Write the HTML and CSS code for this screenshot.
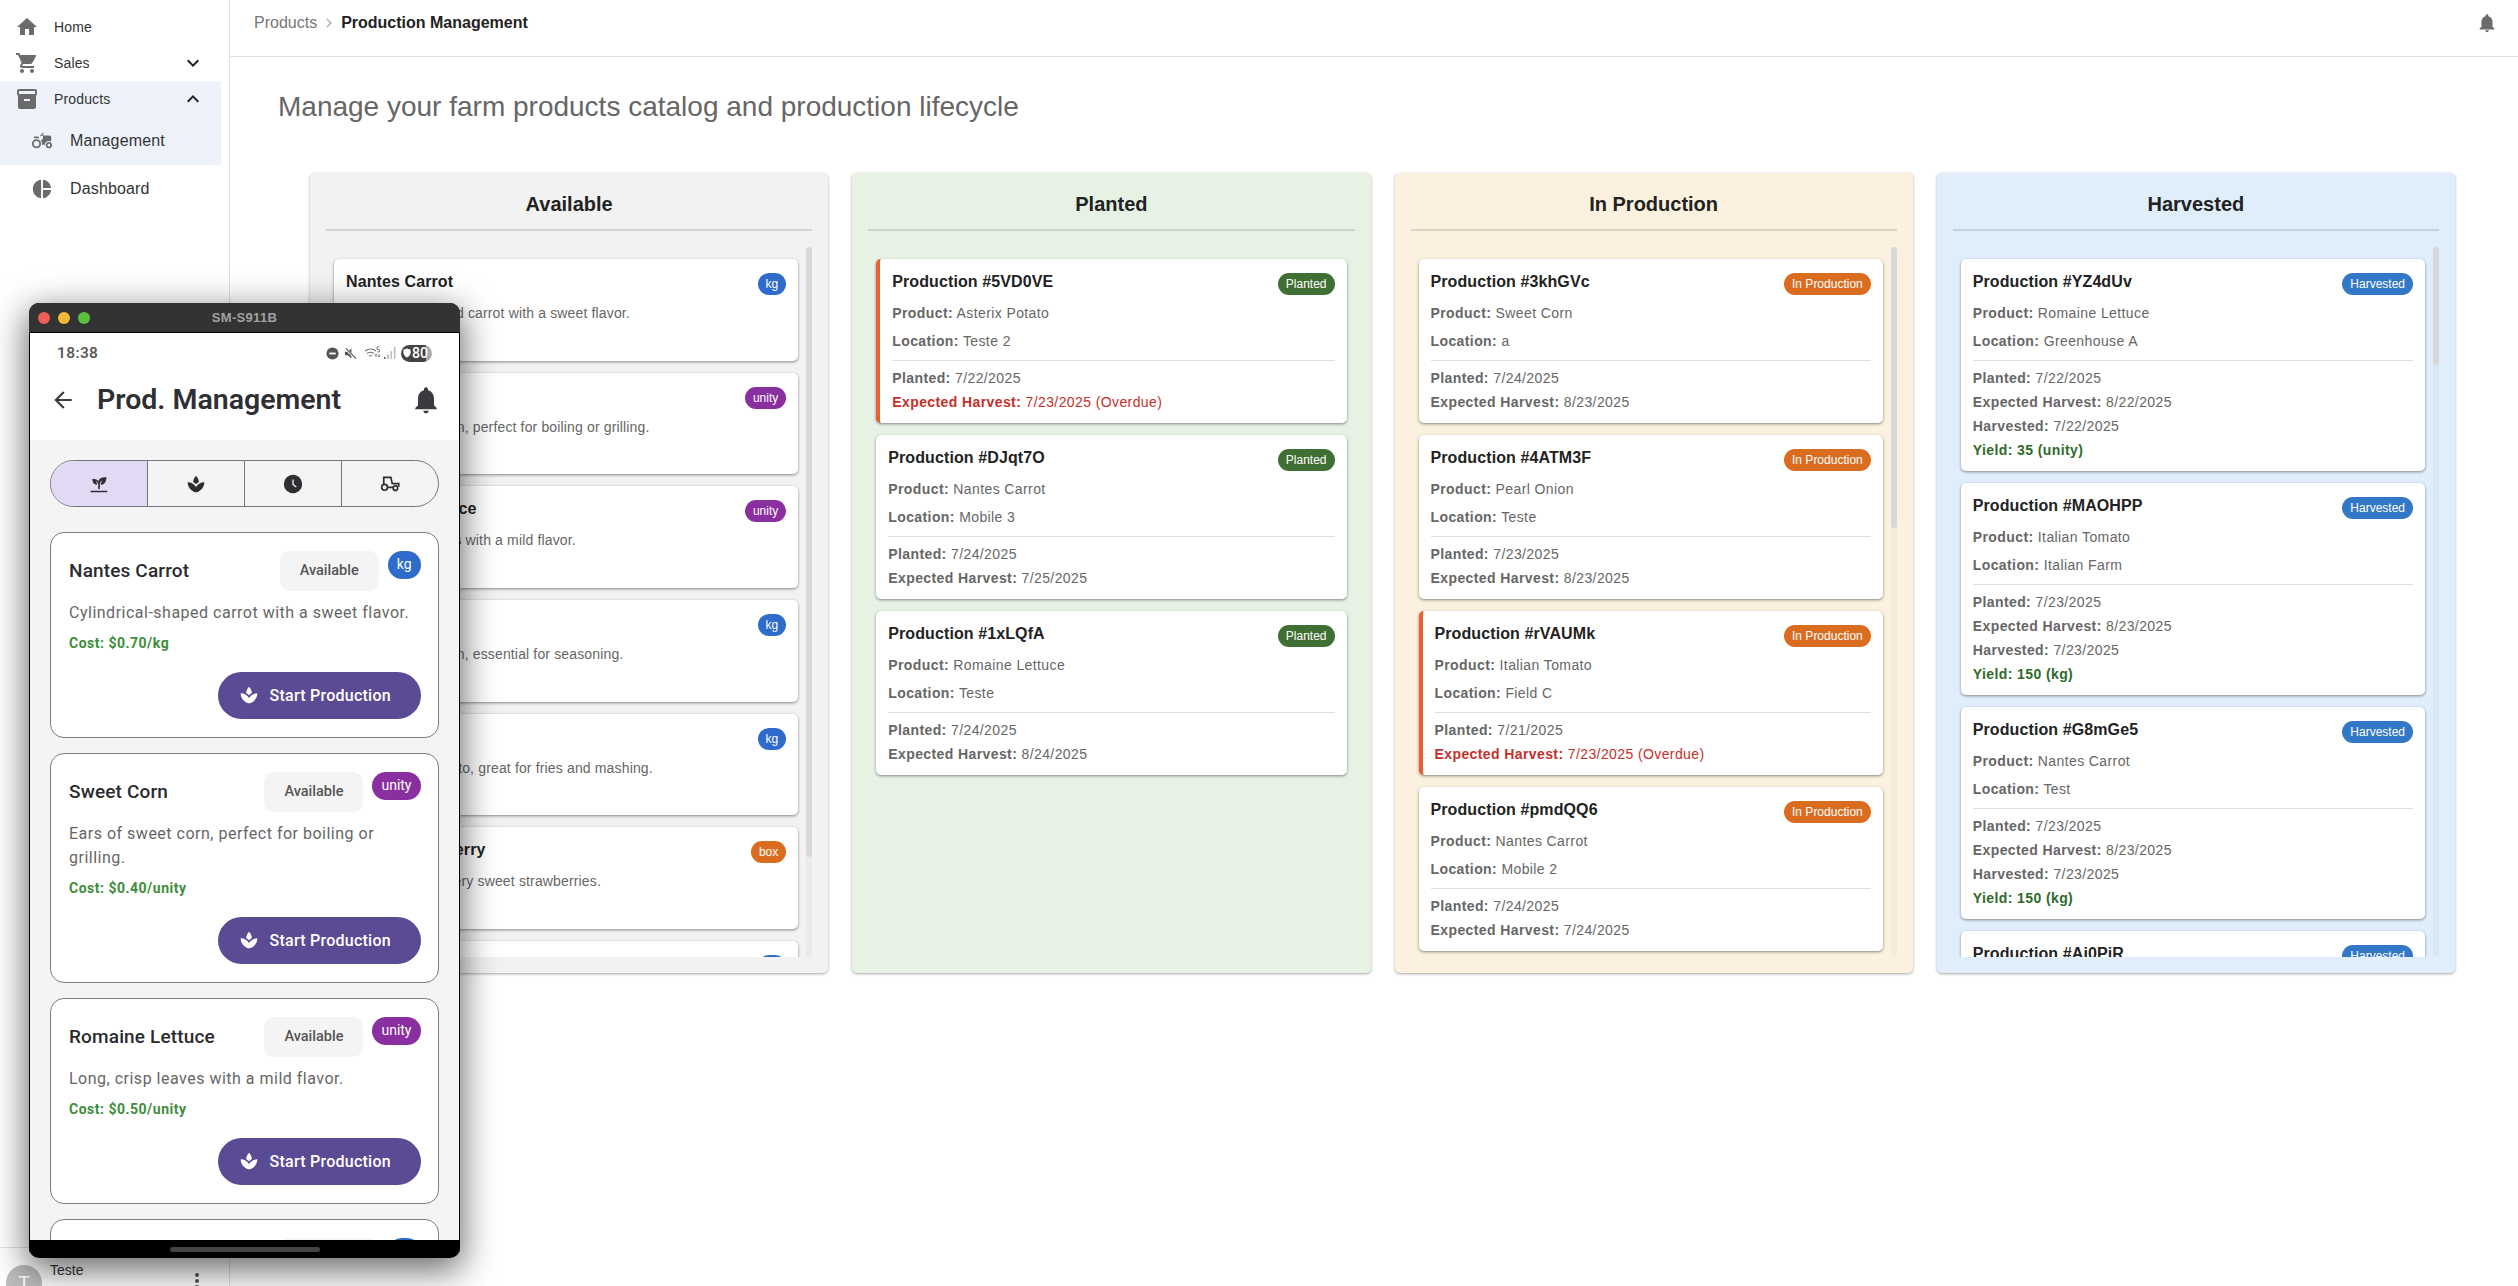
FILE: index.html
```html
<!DOCTYPE html>
<html lang="en">
<head>
    <meta charset="UTF-8">
    <title>Production Management</title>
    <link rel="stylesheet" href="styles.css">
</head>
<body>

<svg class="icon-defs" width="0" height="0">
    <symbol id="i-home" viewBox="0 0 24 24"><path d="M10 20v-6h4v6h5v-8h3L12 3 2 12h3v8z"/></symbol>
    <symbol id="i-cart" viewBox="0 0 24 24"><path d="M7 18c-1.1 0-1.99.9-1.99 2S5.9 22 7 22s2-.9 2-2-.9-2-2-2zM1 2v2h2l3.6 7.59-1.35 2.45c-.16.28-.25.61-.25.96 0 1.1.9 2 2 2h12v-2H7.42c-.14 0-.25-.11-.25-.25l.03-.12.9-1.63h7.45c.75 0 1.41-.41 1.75-1.03l3.58-6.49c.08-.14.12-.31.12-.48 0-.55-.45-1-1-1H5.21l-.94-2H1zm16 16c-1.1 0-1.99.9-1.99 2s.89 2 1.99 2 2-.9 2-2-.9-2-2-2z"/></symbol>
    <symbol id="i-box" viewBox="0 0 24 24"><path d="M20 2H4c-1 0-2 .9-2 2v3.01c0 .72.43 1.34 1 1.69V20c0 1.1 1.1 2 2 2h14c.9 0 2-.9 2-2V8.7c.57-.35 1-.97 1-1.69V4c0-1.1-1-2-2-2zm-5 12H9v-2h6v2zm5-7H4V4l16-.02V7z"/></symbol>
    <symbol id="i-more" viewBox="0 0 24 24"><path d="M16.59 8.59L12 13.17 7.41 8.59 6 10l6 6 6-6z"/></symbol>
    <symbol id="i-less" viewBox="0 0 24 24"><path d="M12 8l-6 6 1.41 1.41L12 10.83l4.59 4.58L18 14z"/></symbol>
    <symbol id="i-pie" viewBox="0 0 24 24"><path d="M11 2v20c-5.07-.5-9-4.79-9-10s3.93-9.5 9-10zm2.03 0v8.99H22c-.47-4.74-4.24-8.52-8.97-8.99zm0 11.01V22c4.74-.47 8.5-4.25 8.97-8.99h-8.97z"/></symbol>
    <symbol id="i-bell" viewBox="0 0 24 24"><path d="M12 22c1.1 0 2-.9 2-2h-4c0 1.1.89 2 2 2zm6-6v-5c0-3.07-1.64-5.64-4.5-6.32V4c0-.83-.67-1.5-1.5-1.5s-1.5.67-1.5 1.5v.68C7.63 5.36 6 7.92 6 11v5l-2 2v1h16v-1l-2-2z"/></symbol>
    <symbol id="i-back" viewBox="0 0 24 24"><path d="M20 11H7.83l5.59-5.59L12 4l-8 8 8 8 1.41-1.41L7.83 13H20v-2z"/></symbol>
    <symbol id="i-spa" viewBox="0 0 24 24"><path d="M15.49 9.63c-.18-2.79-1.31-5.51-3.43-7.63-2.14 2.14-3.32 4.86-3.55 7.63 1.28.68 2.46 1.56 3.49 2.63 1.03-1.06 2.21-1.94 3.49-2.63zM12 15.45C9.85 12.17 6.18 10 2 10c0 5.32 3.36 9.82 8.03 11.49.63.23 1.29.4 1.97.51.68-.12 1.33-.29 1.97-.51C18.64 19.82 22 15.32 22 10c-4.18 0-7.85 2.17-10 5.45z"/></symbol>
    <symbol id="i-farm" viewBox="0 0 24 24"><path d="M19.5 12c.93 0 1.78.28 2.5.76V8c0-1.1-.9-2-2-2h-6.29l-1.06-1.06 1.41-1.41-.71-.71-3.53 3.53.71.71 1.41-1.41L13 6.71V9c0 1.1-.9 2-2 2h-.54c.95 1.06 1.54 2.46 1.54 4 0 .34-.04.67-.09 1h3.14c.25-2.25 2.14-4 4.45-4zM19.5 13c-1.93 0-3.5 1.57-3.5 3.5s1.57 3.5 3.5 3.5 3.5-1.57 3.5-3.5-1.57-3.5-3.5-3.5zm0 5c-.83 0-1.5-.67-1.5-1.5s.67-1.5 1.5-1.5 1.5.67 1.5 1.5-.67 1.5-1.5 1.5zM4 9h5c0-1.1-.9-2-2-2H4c-.55 0-1 .45-1 1s.45 1 1 1zm2 1a5 5 0 100 10 5 5 0 000-10zm0 2a3 3 0 110 6 3 3 0 010-6z"/></symbol>
</svg>

<div class="app">
    <!-- Side menu -->
    <aside class="sidebar">
        <nav class="nav">
            <div class="nav-item"><svg class="nav-icon"><use href="#i-home"/></svg>Home</div>
            <div class="nav-item"><svg class="nav-icon"><use href="#i-cart"/></svg>Sales<svg class="nav-arrow"><use href="#i-more"/></svg></div>
            <div class="nav-open">
                <div class="nav-item"><svg class="nav-icon"><use href="#i-box"/></svg>Products<svg class="nav-arrow"><use href="#i-less"/></svg></div>
                <div class="nav-sub"><svg class="sub-icon"><use href="#i-farm"/></svg>Management</div>
            </div>
            <div class="nav-sub"><svg class="sub-icon"><use href="#i-pie"/></svg>Dashboard</div>
        </nav>
        <div class="user">
            <div class="avatar">T</div>
            <div class="user-name">Teste</div>
            <div class="user-menu"><i></i><i></i><i></i></div>
        </div>
    </aside>

    <div class="content">
        <header class="topbar">
            <span class="crumb">Products</span>
            <svg class="crumb-sep" viewBox="0 0 10 14"><path d="M3 3l4 4-4 4" fill="none" stroke="#aaa" stroke-width="1.3"/></svg>
            <strong class="crumb-now">Production Management</strong>
            <svg class="top-bell"><use href="#i-bell"/></svg>
        </header>

        <main class="page">
            <h1 class="page-title">Manage your farm products catalog and production lifecycle</h1>

            <div class="board">
                <!-- Available -->
                <section class="column col-available">
                    <h2 class="column-title">Available</h2>
                    <div class="column-body">
                        <div class="list">
                            <article class="card card-product">
                                <div class="card-head"><h3>Nantes Carrot</h3><span class="badge b-blue">kg</span></div>
                                <p class="desc">Cylindrical-shaped carrot with a sweet flavor.</p>
                                <p class="cost">Cost: $0.70/kg</p>
                            </article>
                            <article class="card card-product">
                                <div class="card-head"><h3>Sweet Corn</h3><span class="badge b-purple">unity</span></div>
                                <p class="desc">Ears of sweet corn, perfect for boiling or grilling.</p>
                                <p class="cost">Cost: $0.40/unity</p>
                            </article>
                            <article class="card card-product">
                                <div class="card-head"><h3>Romaine Lettuce</h3><span class="badge b-purple">unity</span></div>
                                <p class="desc">Long, crisp leaves with a mild flavor.</p>
                                <p class="cost">Cost: $0.50/unity</p>
                            </article>
                            <article class="card card-product">
                                <div class="card-head"><h3>Pearl Onion</h3><span class="badge b-blue">kg</span></div>
                                <p class="desc">Small yellow onion, essential for seasoning.</p>
                                <p class="cost">Cost: $0.60/kg</p>
                            </article>
                            <article class="card card-product">
                                <div class="card-head"><h3>Asterix Potato</h3><span class="badge b-blue">kg</span></div>
                                <p class="desc">Red-skinned potato, great for fries and mashing.</p>
                                <p class="cost">Cost: $0.30/kg</p>
                            </article>
                            <article class="card card-product">
                                <div class="card-head"><h3>Albion Strawberry</h3><span class="badge b-orange">box</span></div>
                                <p class="desc">Firm, large and very sweet strawberries.</p>
                                <p class="cost">Cost: $1.20/box</p>
                            </article>
                            <article class="card card-product">
                                <div class="card-head"><h3>Italian Tomato</h3><span class="badge b-blue">kg</span></div>
                                <p class="desc">Firm plum tomato, ideal for sauces.</p>
                            </article>
                        </div>
                        <div class="scroll"><div class="thumb thumb-available"></div></div>
                    </div>
                </section>

                <!-- Planted -->
                <section class="column col-planted">
                    <h2 class="column-title">Planted</h2>
                    <div class="column-body">
                        <div class="list">
                            <article class="card overdue">
                                <div class="card-head"><h3>Production #5VD0VE</h3><span class="badge b-green">Planted</span></div>
                                <p class="row"><b>Product:</b> Asterix Potato</p>
                                <p class="row"><b>Location:</b> Teste 2</p>
                                <hr class="rule">
                                <p class="date"><b>Planted:</b> 7/22/2025</p>
                                <p class="date late"><b>Expected Harvest:</b> 7/23/2025 (Overdue)</p>
                            </article>
                            <article class="card">
                                <div class="card-head"><h3>Production #DJqt7O</h3><span class="badge b-green">Planted</span></div>
                                <p class="row"><b>Product:</b> Nantes Carrot</p>
                                <p class="row"><b>Location:</b> Mobile 3</p>
                                <hr class="rule">
                                <p class="date"><b>Planted:</b> 7/24/2025</p>
                                <p class="date"><b>Expected Harvest:</b> 7/25/2025</p>
                            </article>
                            <article class="card">
                                <div class="card-head"><h3>Production #1xLQfA</h3><span class="badge b-green">Planted</span></div>
                                <p class="row"><b>Product:</b> Romaine Lettuce</p>
                                <p class="row"><b>Location:</b> Teste</p>
                                <hr class="rule">
                                <p class="date"><b>Planted:</b> 7/24/2025</p>
                                <p class="date"><b>Expected Harvest:</b> 8/24/2025</p>
                            </article>
                        </div>
                    </div>
                </section>

                <!-- In Production -->
                <section class="column col-production">
                    <h2 class="column-title">In Production</h2>
                    <div class="column-body">
                        <div class="list">
                            <article class="card">
                                <div class="card-head"><h3>Production #3khGVc</h3><span class="badge b-orange">In Production</span></div>
                                <p class="row"><b>Product:</b> Sweet Corn</p>
                                <p class="row"><b>Location:</b> a</p>
                                <hr class="rule">
                                <p class="date"><b>Planted:</b> 7/24/2025</p>
                                <p class="date"><b>Expected Harvest:</b> 8/23/2025</p>
                            </article>
                            <article class="card">
                                <div class="card-head"><h3>Production #4ATM3F</h3><span class="badge b-orange">In Production</span></div>
                                <p class="row"><b>Product:</b> Pearl Onion</p>
                                <p class="row"><b>Location:</b> Teste</p>
                                <hr class="rule">
                                <p class="date"><b>Planted:</b> 7/23/2025</p>
                                <p class="date"><b>Expected Harvest:</b> 8/23/2025</p>
                            </article>
                            <article class="card overdue">
                                <div class="card-head"><h3>Production #rVAUMk</h3><span class="badge b-orange">In Production</span></div>
                                <p class="row"><b>Product:</b> Italian Tomato</p>
                                <p class="row"><b>Location:</b> Field C</p>
                                <hr class="rule">
                                <p class="date"><b>Planted:</b> 7/21/2025</p>
                                <p class="date late"><b>Expected Harvest:</b> 7/23/2025 (Overdue)</p>
                            </article>
                            <article class="card">
                                <div class="card-head"><h3>Production #pmdQQ6</h3><span class="badge b-orange">In Production</span></div>
                                <p class="row"><b>Product:</b> Nantes Carrot</p>
                                <p class="row"><b>Location:</b> Mobile 2</p>
                                <hr class="rule">
                                <p class="date"><b>Planted:</b> 7/24/2025</p>
                                <p class="date"><b>Expected Harvest:</b> 7/24/2025</p>
                            </article>
                        </div>
                        <div class="scroll"><div class="thumb thumb-production"></div></div>
                    </div>
                </section>

                <!-- Harvested -->
                <section class="column col-harvested">
                    <h2 class="column-title">Harvested</h2>
                    <div class="column-body">
                        <div class="list">
                            <article class="card">
                                <div class="card-head"><h3>Production #YZ4dUv</h3><span class="badge b-sky">Harvested</span></div>
                                <p class="row"><b>Product:</b> Romaine Lettuce</p>
                                <p class="row"><b>Location:</b> Greenhouse A</p>
                                <hr class="rule">
                                <p class="date"><b>Planted:</b> 7/22/2025</p>
                                <p class="date"><b>Expected Harvest:</b> 8/22/2025</p>
                                <p class="date"><b>Harvested:</b> 7/22/2025</p>
                                <p class="date yield">Yield: 35 (unity)</p>
                            </article>
                            <article class="card">
                                <div class="card-head"><h3>Production #MAOHPP</h3><span class="badge b-sky">Harvested</span></div>
                                <p class="row"><b>Product:</b> Italian Tomato</p>
                                <p class="row"><b>Location:</b> Italian Farm</p>
                                <hr class="rule">
                                <p class="date"><b>Planted:</b> 7/23/2025</p>
                                <p class="date"><b>Expected Harvest:</b> 8/23/2025</p>
                                <p class="date"><b>Harvested:</b> 7/23/2025</p>
                                <p class="date yield">Yield: 150 (kg)</p>
                            </article>
                            <article class="card">
                                <div class="card-head"><h3>Production #G8mGe5</h3><span class="badge b-sky">Harvested</span></div>
                                <p class="row"><b>Product:</b> Nantes Carrot</p>
                                <p class="row"><b>Location:</b> Test</p>
                                <hr class="rule">
                                <p class="date"><b>Planted:</b> 7/23/2025</p>
                                <p class="date"><b>Expected Harvest:</b> 8/23/2025</p>
                                <p class="date"><b>Harvested:</b> 7/23/2025</p>
                                <p class="date yield">Yield: 150 (kg)</p>
                            </article>
                            <article class="card">
                                <div class="card-head"><h3>Production #Ai0PiR</h3><span class="badge b-sky">Harvested</span></div>
                            </article>
                        </div>
                        <div class="scroll"><div class="thumb thumb-harvested"></div></div>
                    </div>
                </section>
            </div>
        </main>
    </div>
</div>

<!-- Emulator window floating over the page -->
<div class="phone">
    <div class="phone-bar">
        <span class="light light-red"></span><span class="light light-yellow"></span><span class="light light-green"></span>
        <span class="phone-name">SM-S911B</span>
    </div>
    <div class="screen">
        <div class="status">
            <span class="clock">18:38</span>
            <svg class="st-dnd" viewBox="0 0 14 14"><circle cx="7" cy="7" r="6.5" fill="#555"/><rect x="3.5" y="6" width="7" height="2" fill="#fff"/></svg>
            <svg class="st-mute" viewBox="0 0 14 14"><path d="M1 5h3l4-3.5v11L4 9H1z" fill="#555"/><path d="M1.5 1.5l11 11" stroke="#fff" stroke-width="2.4"/><path d="M2 1.5l11 11" stroke="#555" stroke-width="1.3"/></svg>
            <svg class="st-wifi" viewBox="0 0 17 14"><path d="M1 5a9 9 0 0111 0M3 7.5a6 6 0 017 0M5 10a3 3 0 013 0" fill="none" stroke="#777" stroke-width="1.1"/><path d="M6.5 12.5l.01 0" stroke="#777" stroke-width="1.6"/><path d="M13 1h2.5M13 1v2.5h2.4v2.4H13M12 11V8m-1.3 1.2L12 8l1.3 1.2M15 8v3m-1.3-1.2L15 11l1.3-1.2" fill="none" stroke="#777" stroke-width=".9"/></svg>
            <svg class="st-signal" viewBox="0 0 12 12"><rect x="0" y="10" width="1.5" height="2" fill="#666"/><rect x="3.3" y="7.5" width="1.5" height="4.5" fill="#aaa"/><rect x="6.6" y="4" width="1.5" height="8" fill="#bbb"/><rect x="9.9" y="0" width="1.5" height="12" fill="#bbb"/></svg>
            <span class="battery"><svg viewBox="0 0 10 12"><path d="M5 11.5C2 10 .5 8 .5 5V2L5 .5 9.5 2v3c0 3-1.5 5-4.5 6.5z" fill="#fff"/></svg>80</span>
        </div>
        <div class="appbar">
            <svg class="app-back"><use href="#i-back"/></svg>
            <span class="app-title">Prod. Management</span>
            <svg class="app-bell"><use href="#i-bell"/></svg>
        </div>
        <div class="phone-body">
            <div class="segments">
                <div class="segment segment-on">
                    <svg viewBox="0 0 24 24"><path d="M2 22v-2h20v2zM11.3 9.1C10.1 5.2 4 6.1 4 6.1s.2 7.8 5.9 6.6C9.5 9.8 8 9 8 9c2.8 0 3 3.4 3 3.4V18h2v-5.2s0-3.9 3-4.9c0 0-2 3-2 5 7 .7 7-8.900 7-8.900s-8.900-1-9.700 5.100z"/></svg>
                </div>
                <div class="segment"><svg viewBox="0 0 24 24"><use href="#i-spa"/></svg></div>
                <div class="segment">
                    <svg viewBox="0 0 24 24"><circle cx="12" cy="12" r="11"/><path d="M12 6.5v6l4 3" fill="none" stroke="#f4f4f5" stroke-width="1.6"/></svg>
                </div>
                <div class="segment">
                    <svg viewBox="0 0 24 24"><circle class="tractor" cx="5.5" cy="16" r="3.5"/><circle class="tractor" cx="18.5" cy="17" r="2.7"/><path class="tractor" d="M4.5 12.5V4H13l1.7 7.5h7.800v3.800M9 16h6.800"/></svg>
                </div>
            </div>

            <article class="pcard">
                <div class="pcard-head">
                    <h3 class="pcard-name">Nantes Carrot</h3>
                    <span class="pchip">Available</span>
                    <span class="ptag b-blue">kg</span>
                </div>
                <p class="pdesc">Cylindrical-shaped carrot with a sweet flavor.</p>
                <p class="pcost">Cost: $0.70/kg</p>
                <div class="pfoot"><button class="pbtn"><svg><use href="#i-spa"/></svg>Start Production</button></div>
            </article>

            <article class="pcard">
                <div class="pcard-head">
                    <h3 class="pcard-name">Sweet Corn</h3>
                    <span class="pchip">Available</span>
                    <span class="ptag b-purple">unity</span>
                </div>
                <p class="pdesc">Ears of sweet corn, perfect for boiling or grilling.</p>
                <p class="pcost">Cost: $0.40/unity</p>
                <div class="pfoot"><button class="pbtn"><svg><use href="#i-spa"/></svg>Start Production</button></div>
            </article>

            <article class="pcard">
                <div class="pcard-head">
                    <h3 class="pcard-name">Romaine Lettuce</h3>
                    <span class="pchip">Available</span>
                    <span class="ptag b-purple">unity</span>
                </div>
                <p class="pdesc">Long, crisp leaves with a mild flavor.</p>
                <p class="pcost">Cost: $0.50/unity</p>
                <div class="pfoot"><button class="pbtn"><svg><use href="#i-spa"/></svg>Start Production</button></div>
            </article>

            <article class="pcard">
                <div class="pcard-head">
                    <h3 class="pcard-name">Pearl Onion</h3>
                    <span class="pchip">Available</span>
                    <span class="ptag b-blue">kg</span>
                </div>
            </article>
        </div>
        <div class="phone-nav"><span class="handle"></span></div>
    </div>
</div>

</body>
</html>
```

FILE: styles.css
```css
* {
    box-sizing: border-box;
}
html, body {
    height: 100%;
}
body {
    margin: 0;
    overflow: hidden;
    background-color: #fff;
    color: #222;
    font-family: "Liberation Sans", Arial, sans-serif;
    position: relative;
}
p, h1, h2, h3 {
    margin: 0;
}
.icon-defs {
    position: absolute;
}
.app {
    display: flex;
    height: 1286px;
}

/* side menu */
.sidebar {
    width: 230px;
    flex: none;
    border-right: 1px solid #e0e0e0;
    display: flex;
    flex-direction: column;
    fill: #6b6b6b;
}
.nav {
    flex: 1;
    width: 221px;
    padding-top: 9px;
}
.nav-item {
    height: 36px;
    display: flex;
    align-items: center;
    padding-left: 15px;
    font-size: 14px;
    letter-spacing: .15px;
    color: #333;
}
.nav-icon {
    width: 24px;
    height: 24px;
    margin-right: 15px;
    flex: none;
}
.nav-arrow {
    width: 24px;
    height: 24px;
    margin-left: auto;
    margin-right: 16px;
    fill: #222;
}
.nav-open {
    background-color: #edf2fb;
    height: 84px;
}
.nav-sub {
    height: 48px;
    display: flex;
    align-items: center;
    padding-left: 31px;
    font-size: 16px;
    letter-spacing: .15px;
    color: #333;
}
.sub-icon {
    width: 22px;
    height: 22px;
    margin-right: 17px;
    flex: none;
}
.user {
    height: 39px;
    border-top: 1px solid #e0e0e0;
    display: flex;
    padding: 17px 0 0 6px;
    overflow: hidden;
    flex: none;
}
.avatar {
    width: 36px;
    height: 36px;
    border-radius: 50%;
    background-color: #bdbdbd;
    color: #fff;
    font-size: 20px;
    text-align: center;
    line-height: 36px;
    flex: none;
}
.user-name {
    font-size: 14px;
    color: #333;
    margin: -3px 0 0 8px;
}
.user-menu {
    margin: 8px 0 0 auto;
    padding-right: 30px;
}
.user-menu i {
    display: block;
    width: 4px;
    height: 4px;
    border-radius: 50%;
    background-color: #555;
    margin-bottom: 2px;
}

/* top bar */
.content {
    flex: 1;
    display: flex;
    flex-direction: column;
    min-width: 0;
}
.topbar {
    height: 57px;
    flex: none;
    border-bottom: 1px solid #e0e0e0;
    padding: 0 20px 10px 24px;
    display: flex;
    align-items: center;
    font-size: 16px;
}
.crumb {
    color: #777;
}
.crumb-sep {
    width: 10px;
    height: 14px;
    margin: 0 7px;
}
.crumb-now {
    color: #222;
}
.top-bell {
    width: 22px;
    height: 22px;
    margin-left: auto;
    fill: #6b6b6b;
}

/* page */
.page {
    padding: 32px 63px 0 48px;
}
.page-title {
    font-size: 28px;
    font-weight: 400;
    color: #666;
    line-height: 36px;
}
.board {
    display: grid;
    grid-template-columns: repeat(4, 1fr);
    gap: 24px;
    margin: 48px 0 0 32px;
}
.column {
    height: 800px;
    padding: 16px;
    border-radius: 5px;
    box-shadow: 0 1px 3px rgba(0,0,0,.35);
    display: flex;
    flex-direction: column;
    min-width: 0;
}
.col-available { background-color: #f2f2f2; }
.col-planted { background-color: #e7f2e5; }
.col-production { background-color: #fcf1de; }
.col-harvested { background-color: #e0eefb; }
.column-title {
    font-size: 20px;
    text-align: center;
    color: #222;
    line-height: 30px;
    height: 42px;
    border-bottom: 2px solid rgba(0,0,0,.12);
    flex: none;
}
.column-body {
    margin-top: 16px;
    flex: 1;
    min-height: 0;
    display: flex;
}
.list {
    flex: 1;
    min-width: 0;
    overflow: hidden;
    padding: 12px 8px 0;
}
.scroll {
    width: 6px;
    flex: none;
    background-color: rgba(0,0,0,.03);
    border-radius: 3px;
}
.thumb {
    background-color: #d8d8d8;
    border-radius: 3px;
}
.thumb-available { height: 610px; }
.thumb-production { height: 281px; }
.thumb-harvested { height: 118px; }

/* kanban cards */
.card {
    background-color: #fff;
    border-radius: 5px;
    box-shadow: 0 1px 3px rgba(0,0,0,.45);
    padding: 12px 12px 11px;
    margin-bottom: 12px;
}
.card.overdue {
    border-left: 4px solid #e8602c;
}
.card-product {
    height: 101.7px;
}
.card-head {
    display: flex;
    justify-content: space-between;
    align-items: flex-start;
    margin-bottom: 8px;
}
.card-head h3 {
    font-size: 16px;
    line-height: 22px;
    letter-spacing: .1px;
    color: #222;
}
.badge {
    height: 22px;
    line-height: 22px;
    margin-top: 2px;
    padding: 0 8px;
    border-radius: 11px;
    color: #fff;
    font-size: 12px;
}
.b-blue { background-color: #2f6bca; }
.b-purple { background-color: #8a2f9f; }
.b-orange { background-color: #da6c20; }
.b-green { background-color: #3f6f33; }
.b-sky { background-color: #3378c6; }
.desc {
    font-size: 14px;
    line-height: 20px;
    letter-spacing: .15px;
    color: #666;
}
.cost {
    font-size: 13px;
    color: #2e6b2a;
}
.row, .date {
    font-size: 14px;
    line-height: 20px;
    letter-spacing: .4px;
    color: #666;
}
.row {
    margin-bottom: 8px;
}
.date {
    margin-bottom: 4px;
}
.date:last-child {
    margin-bottom: 0;
}
.rule {
    border: 0;
    border-top: 1px solid #e0e0e0;
    margin: 9px 0 7px;
}
.late {
    color: #c62f2a;
}
.yield {
    color: #2e6b2a;
    font-weight: 700;
}

/* emulator window */
.phone {
    position: absolute;
    left: 29px;
    top: 303px;
    width: 431px;
    height: 955px;
    border-radius: 10px;
    background-color: #000;
    box-shadow: 0 10px 35px 2px rgba(0,0,0,.6);
    overflow: hidden;
    display: flex;
    flex-direction: column;
    font-family: Roboto, sans-serif;
}
.phone-bar {
    height: 29px;
    background-color: #333;
    display: flex;
    align-items: center;
    padding-left: 9px;
    flex: none;
    position: relative;
}
.light {
    width: 12px;
    height: 12px;
    border-radius: 50%;
    margin-right: 8px;
}
.light-red { background-color: #ed5f56; }
.light-yellow { background-color: #f4b838; }
.light-green { background-color: #5ac13f; }
.phone-name {
    position: absolute;
    left: 0;
    right: 0;
    text-align: center;
    font-family: "Liberation Sans", sans-serif;
    font-weight: 700;
    font-size: 13px;
    color: #a2a2a2;
    letter-spacing: .3px;
}
.screen {
    flex: 1;
    margin: 1px 1px 0;
    background-color: #fff;
    display: flex;
    flex-direction: column;
    min-height: 0;
}
.status {
    height: 42px;
    display: flex;
    align-items: center;
    padding: 0 27px 2px 27px;
    flex: none;
}
.clock {
    font-size: 15.5px;
    font-weight: 500;
    color: #555;
    letter-spacing: .4px;
    margin-right: auto;
}
.st-dnd { width: 13px; height: 13px; margin-right: 5px; }
.st-mute { width: 13px; height: 13px; margin-right: 7px; }
.st-wifi { width: 17px; height: 14px; margin-right: 3px; }
.st-signal { width: 12px; height: 12px; margin-right: 5px; }
.battery {
    width: 31px;
    height: 17px;
    border-radius: 9px;
    background: linear-gradient(to right, #444 80%, #aaa 80%);
    color: #fff;
    font-size: 14px;
    font-weight: 500;
    display: flex;
    align-items: center;
    padding-left: 2px;
}
.battery svg {
    width: 8px;
    height: 10px;
    margin-right: 1px;
}
.appbar {
    height: 65px;
    display: flex;
    align-items: center;
    padding: 0 17px 16px 20px;
    flex: none;
}
.app-back {
    width: 26px;
    height: 26px;
    fill: #3c3c42;
    margin-right: 21px;
}
.app-title {
    font-size: 28.5px;
    font-weight: 600;
    color: #2e2e33;
}
.app-bell {
    width: 32px;
    height: 32px;
    margin-left: auto;
    fill: #3a3a40;
}
.phone-body {
    flex: 1;
    min-height: 0;
    overflow: hidden;
    background-color: #f4f4f5;
    padding: 20px 20px 0;
}
.segments {
    height: 47px;
    display: flex;
    border: 1.5px solid #79747e;
    border-radius: 24px;
    overflow: hidden;
    margin-bottom: 25px;
}
.segment {
    flex: 1;
    display: flex;
    align-items: center;
    justify-content: center;
    border-right: 1.5px solid #79747e;
    fill: #2e2e33;
}
.segment:last-child {
    border-right: 0;
}
.segment svg {
    width: 20px;
    height: 20px;
}
.segment-on {
    background-color: #e2d9f4;
}
.segment .tractor {
    fill: none;
    stroke: #2e2e33;
    stroke-width: 2;
}
.pcard {
    background-color: #fff;
    border: 1.5px solid #7c7a82;
    border-radius: 14px;
    padding: 18px 17.5px 18.5px 18px;
    margin-bottom: 15px;
}
.pcard-head {
    display: flex;
    align-items: flex-start;
}
.pcard-name {
    font-size: 19px;
    font-weight: 500;
    letter-spacing: .15px;
    color: #2b2b2f;
    line-height: 40px;
    margin-right: auto;
}
.pchip {
    height: 40px;
    line-height: 40px;
    width: 99px;
    text-align: center;
    background-color: #f4f4f4;
    border-radius: 10px;
    font-size: 14.5px;
    font-weight: 500;
    color: #555;
    margin-right: 9px;
}
.ptag {
    height: 28px;
    line-height: 26px;
    padding: 0 9px;
    border-radius: 14px;
    color: #fff;
    font-size: 14px;
}
.pdesc {
    font-size: 16px;
    line-height: 24px;
    letter-spacing: .5px;
    color: #666;
    margin-top: 9.5px;
}
.pcost {
    font-size: 14px;
    font-weight: 700;
    letter-spacing: .5px;
    color: #3e8e3a;
    line-height: 18px;
    margin-top: 9px;
}
.pfoot {
    display: flex;
    justify-content: flex-end;
    margin-top: 20px;
}
.pbtn {
    width: 203px;
    height: 47px;
    border: 0;
    border-radius: 24px;
    background-color: #5b4a94;
    color: #fff;
    font-family: Roboto, sans-serif;
    font-size: 16px;
    font-weight: 500;
    letter-spacing: .25px;
    display: flex;
    align-items: center;
    padding: 0 0 0 21px;
}
.pbtn svg {
    width: 20px;
    height: 20px;
    fill: #fff;
    margin-right: 11px;
}
.phone-nav {
    height: 18px;
    flex: none;
    margin: 0 -1px;
    background-color: #000;
    display: flex;
    align-items: center;
    justify-content: center;
}
.handle {
    width: 150px;
    height: 5px;
    border-radius: 3px;
    background-color: #444;
}
```
